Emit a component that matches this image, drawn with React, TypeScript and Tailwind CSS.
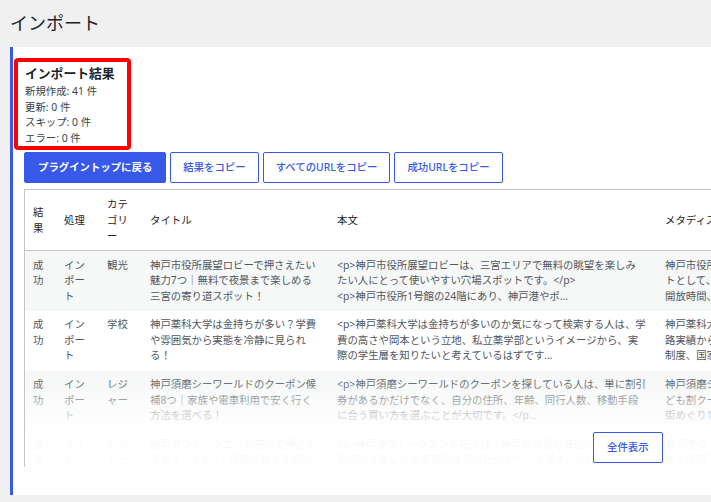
const rows = [
  {
    status: '成功',
    action: 'インポート',
    category: '観光',
    title: '神戸市役所展望ロビーで押さえたい魅力7つ｜無料で夜景まで楽しめる三宮の寄り道スポット！',
    body: '<p>神戸市役所展望ロビーは、三宮エリアで無料の眺望を楽しみ\nたい人にとって使いやすい穴場スポットです。</p>\n<p>神戸市役所1号館の24階にあり、神戸港やポ...',
    meta: '神戸市役所展望ロビーは三宮の人気夜景スポットとして、無料で夜景を楽しめる人気の場所。開放時間、アクセス、混雑状況を解説します。',
  },
  {
    status: '成功',
    action: 'インポート',
    category: '学校',
    title: '神戸薬科大学は金持ちが多い？学費や雰囲気から実態を冷静に見られる！',
    body: '<p>神戸薬科大学は金持ちが多いのか気になって検索する人は、学費の高さや岡本という立地、私立薬学部というイメージから、実際の学生層を知りたいと考えているはずです...',
    meta: '神戸薬科大学の学費や雰囲気、国試合格率や進路実績から見た実態を解説。奨学金や特待生の制度、国家試験対策も紹介します。',
  },
  {
    status: '成功',
    action: 'インポート',
    category: 'レジャー',
    title: '神戸須磨シーワールドのクーポン候補8つ｜家族や電車利用で安く行く方法を選べる！',
    body: '<p>神戸須磨シーワールドのクーポンを探している人は、単に割引券があるかだけでなく、自分の住所、年齢、同行人数、移動手段に合う買い方を選ぶことが大切です。</p...',
    meta: '神戸須磨シーワールドの割引情報を紹介し、子ども割クーポンや年間パス、駅からの行き方、街めぐり1日モデルコースも紹介します。',
  },
  {
    status: '成功',
    action: 'インポート',
    category: 'レジャー',
    title: '神戸港ウィークエンド花火で押さえるポイント8つ｜日程や見える場所を解説！',
    body: '<p>神戸港ウィークエンド花火は、神戸の夜景と海辺の雰囲気を、短時間で楽しめる定期開催型の花火イベントです。</p>\n<p>開催日は土曜日を中心に...',
    meta: '神戸港ウィークエンド花火の開催日と穴場、打ち上げ時間を詳しく解説します。',
  },
]

const summary = ['新規作成: 41 件', '更新: 0 件', 'スキップ: 0 件', 'エラー: 0 件']

export default function App() {
  return (
    <div className="min-h-screen w-full overflow-hidden bg-[#f0f0f1] pt-[10px] pl-[10px] font-['Noto_Sans','Noto_Sans_CJK_JP',sans-serif] text-[#1d2327]">
      <h1 className="text-[18px] leading-[26px] font-normal">インポート</h1>

      <div className="mt-[11px] w-[1100px] border-l-[3px] border-[#3858e9] bg-white pt-[11px] pb-[28px] pl-[11px]">
        <div className="-ml-[10px] w-[117px] rounded-[4px] border-4 border-[#ff0000] px-[7px]">
          <h2 className="text-[12.8px] leading-[22px] font-bold text-[#1d2327]">インポート結果</h2>
          {summary.map((line) => (
            <p key={line} className="text-[10.4px] leading-[15.5px] text-[#3c434a]">
              {line}
            </p>
          ))}
        </div>

        <div className="mt-[2px] flex gap-[4px]">
          <button className="flex h-[31px] items-center rounded-[2px] border border-[#3858e9] bg-[#3858e9] px-[13px] text-[10.4px] font-bold text-white">
            プラグイントップに戻る
          </button>
          <button className="flex h-[31px] items-center rounded-[2px] border border-[#3858e9] bg-white px-[12px] text-[10.4px] font-medium text-[#3858e9]">
            結果をコピー
          </button>
          <button className="flex h-[31px] items-center rounded-[2px] border border-[#3858e9] bg-white px-[12px] text-[10.4px] font-medium text-[#3858e9]">
            すべてのURLをコピー
          </button>
          <button className="flex h-[31px] items-center rounded-[2px] border border-[#3858e9] bg-white px-[12px] text-[10.4px] font-medium text-[#3858e9]">
            成功URLをコピー
          </button>
        </div>

        <div className="relative mt-[6px] h-[278px] overflow-hidden border-t border-l border-[#c3c4c7]">
          <table className="w-[868px] table-fixed text-left text-[10.4px]">
            <colgroup>
              <col className="w-[31px]" />
              <col className="w-[43px]" />
              <col className="w-[43px]" />
              <col className="w-[187px]" />
              <col className="w-[328px]" />
              <col className="w-[236px]" />
            </colgroup>
            <thead>
              <tr className="border-b border-[#c3c4c7] text-[#1d2327]">
                <th className="px-[8px] py-[6px] align-middle leading-[16px] font-normal">結果</th>
                <th className="px-[8px] py-[6px] align-middle leading-[16px] font-normal">処理</th>
                <th className="px-[8px] py-[6px] align-middle leading-[16px] font-normal">カテゴリー</th>
                <th className="px-[8px] py-[6px] align-middle leading-[16px] font-normal">タイトル</th>
                <th className="pl-[8px] pr-[9px] py-[6px] align-middle leading-[16px] font-normal">本文</th>
                <th className="px-[8px] py-[6px] align-middle leading-[16px] font-normal whitespace-nowrap">メタディスクリプション</th>
              </tr>
            </thead>
            <tbody className="text-[#50575e]">
              {rows.map((r, i) => (
                <tr key={i} className={i % 2 === 0 ? 'bg-[#f6f7f7]' : 'bg-white'}>
                  <td className="px-[8px] py-[6.5px] align-top leading-[15.6px]">{r.status}</td>
                  <td className="px-[8px] py-[6.5px] align-top leading-[15.6px]">{r.action}</td>
                  <td className="px-[8px] py-[6.5px] align-top leading-[15.6px]">{r.category}</td>
                  <td className="px-[8px] py-[6.5px] align-top leading-[15.6px]">{r.title}</td>
                  <td className="pl-[8px] pr-[9px] py-[6.5px] align-top leading-[15.6px] whitespace-pre-line">{r.body}</td>
                  <td className="px-[8px] py-[6.5px] align-top leading-[15.6px]">{r.meta}</td>
                </tr>
              ))}
            </tbody>
          </table>

          <div className="pointer-events-none absolute inset-x-0 bottom-0 h-[100px] bg-[linear-gradient(to_bottom,rgba(255,255,255,0)_8%,rgba(255,255,255,0.7)_47%,rgba(255,255,255,0.95)_63%,rgba(255,255,255,0.97)_100%)]" />

          <button className="absolute bottom-[4px] left-[568px] flex h-[31px] items-center rounded-[2px] border border-[#3858e9] bg-white px-[13px] text-[10.4px] font-medium text-[#3858e9]">
            全件表示
          </button>
        </div>
      </div>
    </div>
  )
}
